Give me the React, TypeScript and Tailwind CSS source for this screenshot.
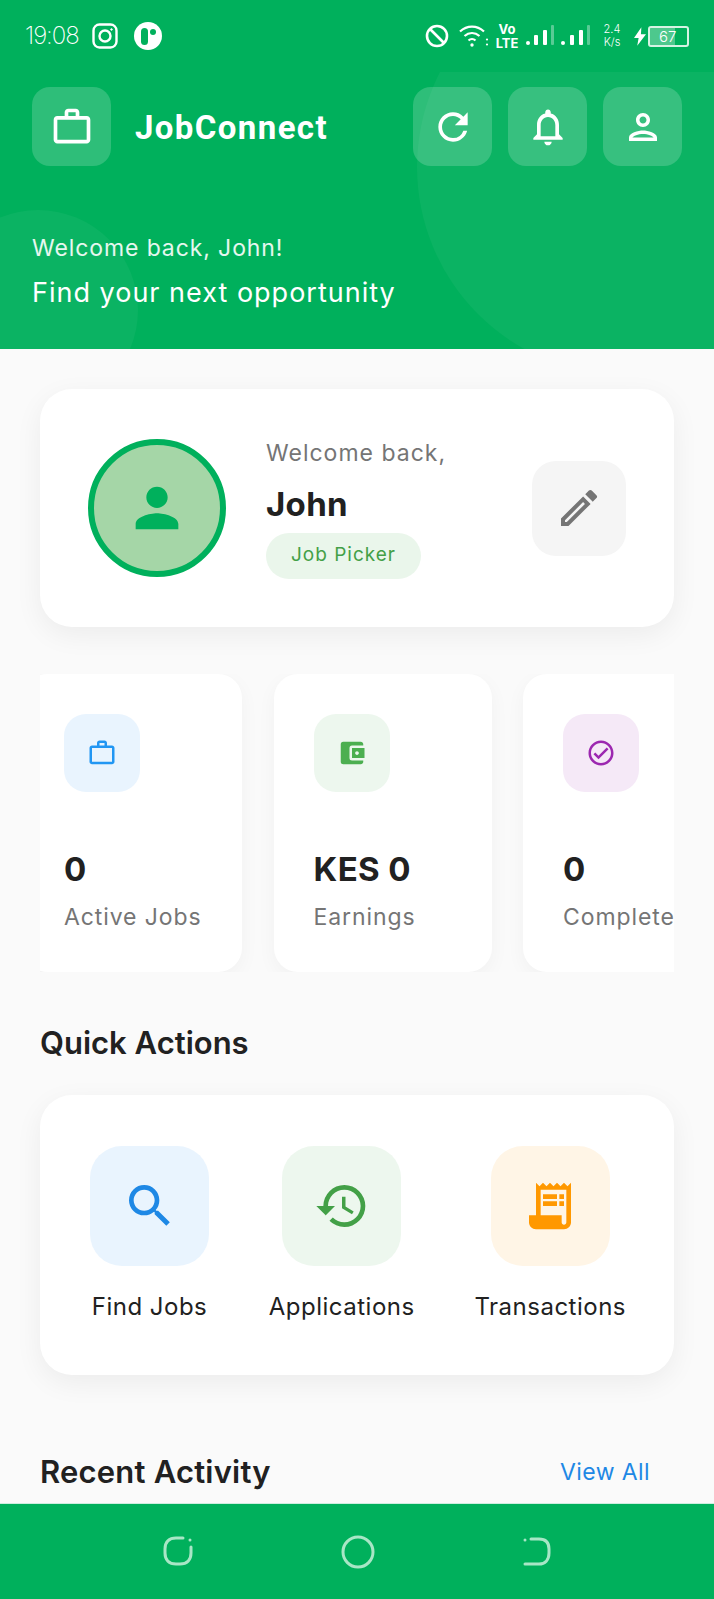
import {
  MdAccountBalanceWallet,
  MdHistory,
  MdNotificationsNone,
  MdOutlineCheckCircle,
  MdOutlineEdit,
  MdOutlinePerson,
  MdOutlineWorkOutline,
  MdPerson,
  MdReceiptLong,
  MdRefresh,
  MdSearch,
} from 'react-icons/md';

const headerActions = [MdRefresh, MdNotificationsNone, MdOutlinePerson];

const stats = [
  { icon: MdOutlineWorkOutline, tile: 'bg-[#e9f4fe]', color: 'text-[#2196f3]', value: '0', label: 'Active Jobs' },
  { icon: MdAccountBalanceWallet, tile: 'bg-[#edf7ee]', color: 'text-[#4caf50]', value: 'KES 0', label: 'Earnings' },
  { icon: MdOutlineCheckCircle, tile: 'bg-[#f5e9f7]', color: 'text-[#9c27b0]', value: '0', label: 'Completed' },
];

const actions = [
  { icon: MdSearch, tile: 'bg-[#e9f4fe]', color: 'text-[#1e88e5]', label: 'Find Jobs' },
  { icon: MdHistory, tile: 'bg-[#edf7ee]', color: 'text-[#43a047]', label: 'Applications' },
  { icon: MdReceiptLong, tile: 'bg-[#fff5e6]', color: 'text-[#ff9800]', label: 'Transactions' },
];

function StatusBar() {
  return (
    <div className="flex h-[72px] items-center justify-between pl-[25px] pr-[25px] text-white">
      <div className="flex items-center">
        <span className="text-[24px] font-extralight tracking-[-1px]">19:08</span>
        <svg width="26" height="26" viewBox="0 0 26 26" fill="none" stroke="white" strokeWidth="2.4" className="ml-[13px]">
          <rect x="1.5" y="1.5" width="23" height="23" rx="6" />
          <circle cx="13" cy="13" r="5.500" />
          <circle cx="19.500" cy="6.500" r="0.800" fill="white" strokeWidth="1" />
        </svg>
        <svg width="28" height="28" viewBox="0 0 28 28" className="ml-[16px]">
          <circle cx="14" cy="14" r="14" fill="white" />
          <rect x="7" y="6" width="7" height="17" rx="3.500" fill="#00b05c" />
          <circle cx="19" cy="10" r="3" fill="#00b05c" />
        </svg>
      </div>
      <div className="flex items-center">
        <svg width="24" height="24" viewBox="0 0 24 24" fill="none" stroke="white" strokeWidth="2.600">
          <circle cx="12" cy="12" r="10" />
          <path d="M5 5l14 14" />
        </svg>
        <svg width="30" height="26" viewBox="0 0 30 26" fill="none" stroke="white" strokeWidth="2.200" className="ml-[10px]">
          <path d="M1 8.500c7-6.500 17-6.500 24 0" />
          <path d="M5.500 13c4.500-4 10.500-4 15 0" />
          <path d="M9.500 17.500c2-1.800 5-1.800 7 0" />
          <circle cx="13" cy="22" r="1.700" fill="white" stroke="none" />
          <circle cx="28" cy="16.500" r="1.100" fill="white" stroke="none" />
          <circle cx="28" cy="21.500" r="1.100" fill="white" stroke="none" />
        </svg>
        <div className="ml-[5px] flex w-[26px] flex-col items-center text-[13px] font-bold leading-[14px]">
          <span>Vo</span>
          <span>LTE</span>
        </div>
        <svg width="67" height="26" viewBox="0 0 67 26" fill="white" className="ml-[5px]">
          <rect x="1" y="18" width="4" height="4" rx="2" />
          <rect x="9" y="12" width="4" height="10" rx="1" />
          <rect x="18" y="7" width="4" height="15" rx="1" />
          <rect x="26" y="2" width="3" height="20" rx="1" opacity="0.35" />
          <rect x="36" y="18" width="4" height="4" rx="2" />
          <rect x="45" y="12" width="4" height="10" rx="1" />
          <rect x="54" y="7" width="4" height="15" rx="1" />
          <rect x="62" y="2" width="3" height="20" rx="1" opacity="0.35" />
        </svg>
        <div className="ml-[9px] flex w-[22px] flex-col items-center text-[11px] font-light leading-[13px]">
          <span>2.4</span>
          <span>K/s</span>
        </div>
        <svg width="12" height="19" viewBox="0 0 13 20" fill="white" className="ml-[11px]">
          <path d="M8 0 0 11.500h5L3.500 20 13 7.500H7.500z" />
        </svg>
        <div className="relative ml-[2px] flex h-[21px] w-[41px] items-center overflow-hidden rounded-[3px] border-2 border-[#d5f3e3]">
          <div className="absolute inset-y-0 left-0 w-[67%] bg-white/30" />
          <span className="relative ml-[9px] text-[15px] font-light leading-none">67</span>
        </div>
      </div>
    </div>
  );
}

function Header() {
  return (
    <header className="relative h-[349px] shrink-0 bg-[#00b05c]">
      <StatusBar />
      <div className="relative h-[277px] overflow-hidden">
        <div className="absolute left-[417px] top-[-113px] h-[416px] w-[416px] rounded-full bg-white/[0.045]" />
        <div className="absolute left-[-62px] top-[138px] h-[200px] w-[200px] rounded-full bg-white/[0.045]" />
        <div className="relative flex items-start pl-[32px] pr-[32px] pt-[15px]">
          <div className="flex h-[79px] w-[79px] items-center justify-center rounded-[18px] bg-white/[0.18] text-white">
            <MdOutlineWorkOutline size={44} />
          </div>
          <span className="ml-[24px] mt-[19px] font-['Roboto',sans-serif] text-[33px] font-bold leading-[44px] tracking-[1.4px] text-white">
            JobConnect
          </span>
          <div className="ml-auto flex gap-[16px]">
            {headerActions.map((Icon, i) => (
              <div key={i} className="flex h-[79px] w-[79px] items-center justify-center rounded-[18px] bg-white/[0.18] text-white">
                <Icon size={i === 2 ? 42 : 44} />
              </div>
            ))}
          </div>
        </div>
        <div className="relative mt-[66px] pl-[32px]">
          <div className="text-[23px] leading-[32px] tracking-[0.9px] text-white/90">Welcome back, John!</div>
          <div className="mt-[11px] text-[27px] leading-[36px] tracking-[1px] text-white">Find your next opportunity</div>
        </div>
      </div>
    </header>
  );
}

function ProfileCard() {
  return (
    <section className="flex h-[238px] items-center rounded-[32px] bg-white pl-[48px] pr-[48px] shadow-[0_8px_28px_rgba(0,0,0,0.06)]">
      <div className="flex h-[138px] w-[138px] shrink-0 items-center justify-center rounded-full border-[6px] border-[#00b05c] bg-[#a5d6a7] text-[#00b05c]">
        <MdPerson size={64} />
      </div>
      <div className="ml-[40px] flex-1">
        <div className="text-[23px] leading-[30px] tracking-[1px] text-[#757575]">Welcome back,</div>
        <div className="mt-[15px] text-[33px] font-bold leading-[42px] tracking-[0.3px] text-[#212121]">John</div>
        <div className="mt-[8px] inline-flex h-[46px] w-[155px] items-center justify-center rounded-full bg-[#eaf6eb] text-[19px] tracking-[1px] text-[#43a047]">
          Job Picker
        </div>
      </div>
      <div className="flex h-[95px] w-[94px] items-center justify-center rounded-[24px] bg-[#f5f5f5] text-[#757575]">
        <MdOutlineEdit size={48} />
      </div>
    </section>
  );
}

function StatsRow() {
  return (
    <section className="mt-[47px] overflow-hidden">
      <div className="-ml-[16px] flex w-max gap-[31.5px]">
        {stats.map((stat) => (
          <div key={stat.label} className="h-[298px] w-[218px] shrink-0 rounded-[24px] bg-white pl-[40px] pt-[40px] shadow-[0_6px_20px_rgba(0,0,0,0.04)]">
            <div className={`flex h-[78px] w-[76px] items-center justify-center rounded-[22px] ${stat.tile} ${stat.color}`}>
              <stat.icon size={30} />
            </div>
            <div className="mt-[55px] text-[33px] font-bold leading-[44px] tracking-[0.4px] text-[#212121]">{stat.value}</div>
            <div className="mt-[11px] whitespace-nowrap text-[23px] leading-[30px] tracking-[0.9px] text-[#757575]">{stat.label}</div>
          </div>
        ))}
      </div>
    </section>
  );
}

function QuickActions() {
  return (
    <section className="mt-[50px]">
      <h2 className="text-[31px] font-semibold leading-[42px] text-[#212121]">Quick Actions</h2>
      <div className="mt-[31px] flex h-[280px] justify-between rounded-[32px] bg-white pl-[50px] pr-[48px] pt-[51px] shadow-[0_8px_28px_rgba(0,0,0,0.06)]">
        {actions.map((action) => (
          <div key={action.label} className="flex flex-col items-center">
            <div className={`flex h-[120px] w-[119px] items-center justify-center rounded-[32px] ${action.tile} ${action.color}`}>
              <action.icon size={56} />
            </div>
            <div className="mt-[25px] whitespace-nowrap text-[24px] leading-[32px] tracking-[0.5px] text-[#212121]">{action.label}</div>
          </div>
        ))}
      </div>
    </section>
  );
}

function NavBar() {
  return (
    <nav className="flex h-[96px] shrink-0 items-start justify-center border-t border-[#cdeee0] bg-[#00b05c] pt-[31px]">
      <svg width="32" height="32" viewBox="0 0 32 32" fill="none" stroke="#a8e6c6" strokeWidth="3" strokeLinecap="round" className="ml-[1px]">
        <path d="M21 3h-7C7 3 3 7 3 14v4c0 7 4 11 11 11h4c7 0 11-4 11-11v-6" />
        <path d="M28 5v.1" />
      </svg>
      <svg width="34" height="34" viewBox="0 0 34 34" fill="none" stroke="#a8e6c6" strokeWidth="3" className="ml-[147px]">
        <circle cx="17" cy="17" r="15" />
      </svg>
      <svg width="30" height="32" viewBox="0 0 30 32" fill="none" stroke="#a8e6c6" strokeWidth="3" strokeLinecap="round" className="ml-[147px] mr-[2px]">
        <path d="M9 4h8c7 0 10 4 10 10v4c0 7-4 11-10 11H3" />
        <path d="M3 5v.1" />
      </svg>
    </nav>
  );
}

export default function App() {
  return (
    <div className="flex h-[1599px] w-[714px] flex-col overflow-hidden bg-[#fafafa] font-['Inter',sans-serif]">
      <Header />
      <main className="min-h-0 flex-1 overflow-hidden pl-[40px] pr-[40px] pt-[40px]">
        <ProfileCard />
        <StatsRow />
        <QuickActions />
        <div className="mt-[75px] flex items-center justify-between pr-[24px]">
          <h2 className="text-[31px] font-semibold leading-[44px] tracking-[0.2px] text-[#212121]">Recent Activity</h2>
          <span className="text-[23px] tracking-[0.4px] text-[#1e88e5]">View All</span>
        </div>
      </main>
      <NavBar />
    </div>
  );
}
